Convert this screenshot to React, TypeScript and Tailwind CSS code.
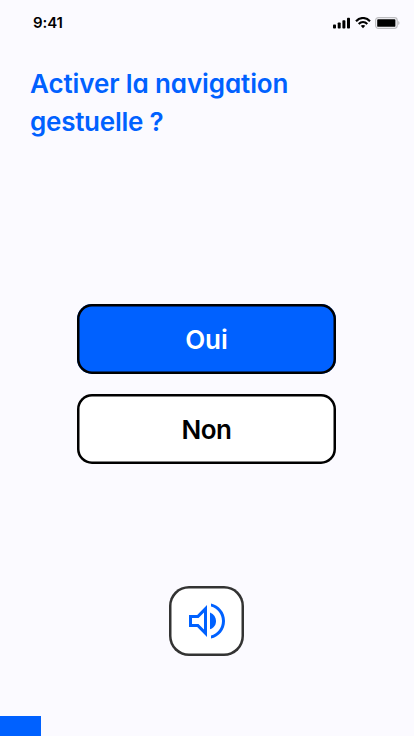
import React from "react";

function StatusBar() {
  return (
    <header className="flex h-[46px] items-center justify-between pl-[33px] pr-[13px] text-black">
      <time className="pb-0.5 font-['Inter',sans-serif] text-[15px] font-semibold leading-none tracking-[-0.1px]">9:41</time>
      <div className="flex h-3 items-center">
        <svg width="18" height="12" viewBox="0 0 18 12" fill="currentColor">
          <rect x="0" y="7.5" width="3" height="4" rx="0.8" />
          <rect x="4.7" y="5.5" width="3" height="6" rx="0.8" />
          <rect x="9.4" y="3.2" width="3" height="8.3" rx="0.8" />
          <rect x="14" y="0.7" width="3" height="10.8" rx="0.8" />
        </svg>
        <svg className="ml-1" width="16" height="12" viewBox="0 0 16 12" fill="none" stroke="currentColor" strokeWidth="2.1">
          <path d="M1 4.2C5-.1 11-.1 15 4.2" />
          <path d="M3.7 7C6.2 4.4 9.8 4.4 12.3 7" />
          <path d="M5.7 8.8C7 7.7 9 7.7 10.3 8.8L8 11.2Z" fill="currentColor" stroke="none" />
        </svg>
        <svg className="ml-1" width="26" height="12" viewBox="0 0 26 12">
          <rect x="0.6" y="0.6" width="21.6" height="10.8" rx="2.8" fill="none" stroke="#bdbdc0" strokeWidth="1.2" />
          <rect x="2.2" y="2.2" width="18.2" height="7.6" rx="0.9" />
          <path d="M23.2 4v4c1.8-.8 1.8-3.2 0-4Z" fill="#bdbdc0" />
        </svg>
      </div>
    </header>
  );
}

function ChoiceButton({ label, primary = false }: { label: string; primary?: boolean }) {
  return (
    <button
      className={`flex h-[70px] w-[259px] items-center justify-center rounded-[15px] pt-px text-[26px] font-semibold leading-none shadow-[inset_0_0_0_2.5px_#000] ${
        primary ? "bg-[#0061ff] text-white" : "bg-white tracking-[-0.5px] text-black"
      }`}
    >
      {label}
    </button>
  );
}

export default function App() {
  return (
    <div className="flex h-[736px] w-[414px] flex-col overflow-hidden bg-[#fbfaff] font-['Inter',sans-serif] [font-feature-settings:'cv11']">
      <StatusBar />
      <h1 className="ml-[30px] mt-[19px] h-[76px] whitespace-nowrap text-[26px] font-semibold leading-[38px] tracking-[-0.11px] text-[#0061ff]">
        Activer la navigation
        <br />
        <span className="tracking-[-0.25px]">gestuelle ?</span>
      </h1>
      <main className="ml-[77px] mt-[163px] flex flex-col gap-5">
        <ChoiceButton label="Oui" primary />
        <ChoiceButton label="Non" />
      </main>
      <button
        aria-label="Écouter"
        className="ml-[169px] mt-[122px] flex h-[70px] w-[75px] items-center justify-center rounded-[20px] bg-white pl-px text-[#0061ff] shadow-[inset_0_0_0_2.5px_#333]"
      >
        <svg width="48" height="48" viewBox="0 0 48 48" fill="currentColor">
          <path fillRule="evenodd" d="M6 18H14.2L24 8V40L14.2 30H6ZM9 21V27H15.5L21 32.6V15.4L15.5 21Z" />
          <path d="M27 15.4C31 17 33 20.3 33 24s-2 7-6 8.3Z" />
          <path d="M28 6.4C36 8.2 42 15.2 42 23.9S36 39.7 28 41.5V38.4C34.4 36.6 39 30.8 39 23.9S34.4 11.3 28 9.5Z" />
        </svg>
      </button>
      <div className="mt-auto h-5 w-[41px] bg-[#0061ff]" />
    </div>
  );
}
